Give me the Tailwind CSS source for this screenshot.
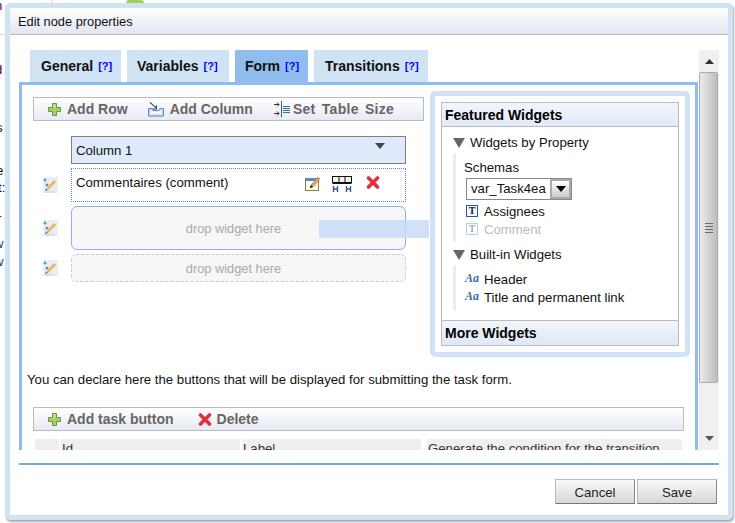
<!DOCTYPE html>
<html>
<head>
<meta charset="utf-8">
<script src="https://cdn.jsdelivr.net/npm/@tailwindcss/browser@4"></script>
</head>
<body class="relative w-[735px] h-[523px] overflow-hidden bg-white font-['Liberation_Sans',Arial,sans-serif] text-[13.2px] leading-4 text-[#111]">
<!-- page underneath the dialog -->
<div class="absolute left-[52px] top-0 w-px h-[3px] bg-[#f3c9d3]"></div>
<div class="absolute left-[126px] top-0 w-[18px] h-[3px] rounded-t-full bg-[#a5cf5a]"></div>
<div class="absolute left-0 top-[34px] w-[5px] h-px bg-[#f3c9d3]"></div>
<span class="absolute left-[-5px] top-[-2px] text-[#603]">n</span>
<span class="absolute left-[-5px] top-[62px] text-[#603]">d</span>
<span class="absolute left-[-4px] top-[120px]">s</span>
<span class="absolute left-[-4px] top-[163px]">e</span>
<span class="absolute left-[-2px] top-[180px]">t:</span>
<span class="absolute left-[-3px] top-[211px] text-[#603]">r</span>
<span class="absolute left-[-6px] top-[236px] text-[#246]">w</span>
<span class="absolute left-[-6px] top-[254px] text-[#246]">w</span>

<!-- dialog -->
<div class="absolute left-[5px] top-[3px] w-[728px] h-[517px] flex flex-col border-[5px] border-[#d0e3f5] rounded-[5px] bg-white shadow-[1px_2px_2px_#aaa]">
  <div class="h-[27px] shrink-0 flex items-center pl-[8px] pt-[2px] text-[12.8px] bg-gradient-to-b from-white to-[#e2e6f1] border-b border-[#bbb]">Edit node properties</div>

  <div class="mt-[15px] ml-[9px] w-[700px] h-[400px] shrink-0 flex overflow-hidden">
    <div class="w-[680px] shrink-0">
      <!-- tabs -->
      <div class="h-[32px] flex gap-[6px] pl-[11px] font-bold text-[14px]">
        <div class="w-[91px] pl-[11px] flex items-center gap-[5px] bg-[#d0e3f5]">General <span class="text-[11px] text-[#00f]">[?]</span></div>
        <div class="w-[102px] pl-[10px] flex items-center gap-[5px] bg-[#d0e3f5]">Variables <span class="text-[11px] text-[#00f]">[?]</span></div>
        <div class="w-[73px] pl-[10px] flex items-center gap-[5px] bg-[#90bdee]">Form <span class="text-[11px] text-[#00f]">[?]</span></div>
        <div class="w-[114px] pl-[11px] flex items-center gap-[5px] bg-[#d0e3f5]">Transitions <span class="text-[11px] text-[#00f]">[?]</span></div>
      </div>
      <!-- panel -->
      <div class="relative w-[679px] h-[400px] border-[3px] border-[#90bdee] pl-[5px] bg-white">
        <div class="flex ml-[6px] mt-[6px]">
          <!-- left column -->
          <div class="w-[391px] shrink-0 pt-[6px]">
            <div class="h-[24px] flex items-center pl-[14px] border border-[#bbb] bg-gradient-to-b from-white to-[#e6eaf4] font-bold text-[14px] text-[#666]">
              <svg class="w-[13px] h-[13px] mr-[6px]" viewBox="0 0 13 13"><path d="M4.5 .5h4v4h4v4h-4v4h-4v-4h-4v-4h4z" fill="#a9cf63" stroke="#5f9a45"/><path d="M5.5 1.5h2v3h-2z" fill="#d9ea9f"/></svg>
              <span>Add Row</span>
              <svg class="w-[16px] h-[15px] ml-[20px] mr-[6px]" viewBox="0 0 17 15"><path d="M.5 6.5h4l1 2h6l1-2h4v8H.5z" fill="#cfe0f2" stroke="#4f7fb0"/><path d="M3 9.500h11v2.500H3z" fill="#fff"/><path d="M2 0l7 6M9 3v4H5" fill="none" stroke="#234a7a" stroke-width="1.200"/></svg>
              <span>Add Column</span>
              <svg class="w-[16px] h-[16px] ml-[21px] mr-[3px]" viewBox="0 0 16 16"><path d="M0 3.500h5M3 1.500l2 2-2 2M0 12.500h5M3 10.500l2 2-2 2" fill="none" stroke="#333"/><path d="M7.500 0v16" stroke="#555"/><path d="M9 5.500h7M9 7.500h7M9 9.500h7M9 11.500h7" stroke="#3a6ea5"/></svg>
              <span class="[word-spacing:2px] tracking-[0.3px]">Set Table Size</span>
            </div>
            <div class="pl-[10px]">
              <div class="ml-[28px] mt-[15px] w-[335px] h-[28px] flex items-center justify-between pl-[4px] pr-[20px] border border-[#808080] bg-[#dfeafc]">
                <span class="mt-[2px]">Column 1</span>
                <svg class="w-[10px] h-[6px] mb-[9px]" viewBox="0 0 10 6"><path d="M0 0h10L5 6z" fill="#444"/></svg>
              </div>
              <div class="flex items-center mt-[4px] gap-[13px]">
                <svg class="w-[15px] h-[16px] shrink-0" viewBox="0 0 15 16"><rect width="15" height="16" fill="#e9eef6"/><circle cx="2" cy="3" r="1.500" fill="#4aa"/><circle cx="4" cy="8" r="1.500" fill="#5a8fd0"/><path d="M3 12L11 3l2 2-8 8z" fill="#e8b64c"/><path d="M3 12l-1 2 3-1z" fill="#555"/><path d="M2 15h10" stroke="#ccc"/></svg>
                <div class="w-[335px] h-[34px] flex justify-between border border-dotted border-[#5d8ac0] pl-[4px] pt-[6px] pr-[25px]">
                  <span>Commentaires (comment)</span>
                  <div class="flex items-start gap-[12px]">
                    <svg class="w-[15px] h-[16px]" viewBox="0 0 15 16"><rect x=".5" y="3.500" width="13" height="12" fill="#fffdf2" stroke="#8f8040"/><rect x="1" y="3" width="12" height="3" fill="#4d8fd6"/><path d="M6 10l7-8 2 2-7 8-3 1z" fill="#e8a15a" stroke="#a36a32" stroke-width=".5"/><path d="M5 13l1-3 2 2z" fill="#222"/></svg>
                    <svg class="w-[20px] h-[18px] mr-[2px]" viewBox="0 0 20 18"><rect x=".500" y="1.500" width="19" height="6" fill="#f4f4f4" stroke="#111"/><path d="M7 1v7M13 1v7" stroke="#111"/><path d="M.5 8h19" stroke="#111" stroke-width="2"/><path d="M1.500 11v6M5.500 11v6M1.500 14h4M14.500 11v6M18.500 11v6M14.500 14h4" stroke="#2f5b8a" stroke-width="1.400"/></svg>
                    <svg class="w-[14px] h-[13px] mt-[1px]" viewBox="0 0 14 13"><path d="M2.500 2l9 9M11.500 2l-9 9" stroke="#e0303c" stroke-width="3.600" stroke-linecap="round"/></svg>
                  </div>
                </div>
              </div>
              <div class="flex items-center mt-[4px] gap-[13px]">
                <svg class="w-[15px] h-[16px] shrink-0" viewBox="0 0 15 16"><rect width="15" height="16" fill="#e9eef6"/><circle cx="2" cy="3" r="1.500" fill="#4aa"/><circle cx="4" cy="8" r="1.500" fill="#5a8fd0"/><path d="M3 12L11 3l2 2-8 8z" fill="#e8b64c"/><path d="M3 12l-1 2 3-1z" fill="#555"/><path d="M2 15h10" stroke="#ccc"/></svg>
                <div class="w-[335px] h-[44px] flex items-center justify-center pt-[2px] pr-[10px] rounded-[6px] border border-[#8fb2e0] bg-[#f6f6f6] text-[12.8px] text-[#aaa]">drop widget here</div>
              </div>
              <div class="flex items-center mt-[4px] gap-[13px]">
                <svg class="w-[15px] h-[16px] shrink-0" viewBox="0 0 15 16"><rect width="15" height="16" fill="#e9eef6"/><circle cx="2" cy="3" r="1.500" fill="#4aa"/><circle cx="4" cy="8" r="1.500" fill="#5a8fd0"/><path d="M3 12L11 3l2 2-8 8z" fill="#e8b64c"/><path d="M3 12l-1 2 3-1z" fill="#555"/><path d="M2 15h10" stroke="#ccc"/></svg>
                <div class="w-[335px] h-[28px] flex items-center justify-center pt-[2px] pr-[10px] rounded-[5px] border border-dashed border-[#ccc] bg-[#f6f6f6] text-[12.8px] text-[#aaa]">drop widget here</div>
              </div>
            </div>
          </div>
          <!-- widgets panel -->
          <div class="ml-[6px] w-[260px] h-[266px] shrink-0 border-[5px] border-[#d0e3f5] rounded-[5px] p-[6px] bg-white">
            <div class="h-[244px] flex flex-col border border-[#bbb]">
              <div class="h-[24px] shrink-0 flex items-center pl-[3px] font-bold text-[14px] text-black border-b border-[#bbb] bg-gradient-to-b from-[#f2f5fb] to-[#e2eaf8]">Featured Widgets</div>
              <div class="flex-1 pl-[11px]">
                <div class="mt-[8px] h-[16px] flex items-center gap-[5px]">
                  <svg class="w-[12px] h-[10px]" viewBox="0 0 12 10"><path d="M0 0h12L6 10z" fill="#666"/></svg>
                  <span>Widgets by Property</span>
                </div>
                <div class="mt-[3px] h-[88px] border-l-[3px] border-[#e6edf8] pl-[8px] pt-[5px]">
                  <div class="h-[16px] pt-[1px]">Schemas</div>
                  <div class="mt-[3px] ml-[2px] w-[106px] h-[22px] flex items-center justify-between border border-[#888] pl-[4px]">
                    <span>var_Task4ea</span>
                    <span class="w-[21px] h-[20px] flex items-center justify-center border-2 border-[#aaa] bg-gradient-to-b from-white to-[#ccc]">
                      <svg class="w-[10px] h-[6px]" viewBox="0 0 10 6"><path d="M0 0h10L5 6z" fill="#000"/></svg>
                    </span>
                  </div>
                  <div class="mt-[2px] ml-[2px] h-[18px] flex items-center gap-[6px]">
                    <span class="w-[12px] h-[12px] flex items-center justify-center border border-[#2a5d96] bg-[#f2f6fb] font-['Liberation_Serif',serif] font-bold text-[10px] leading-none text-[#123]">T</span>
                    <span class="mt-[2px]">Assignees</span>
                  </div>
                  <div class="ml-[2px] h-[18px] flex items-center gap-[6px] text-[#bbb]">
                    <span class="w-[12px] h-[12px] flex items-center justify-center border border-[#b5cfe6] font-['Liberation_Serif',serif] font-bold text-[10px] leading-none text-[#aaa]">T</span>
                    <span class="mt-[2px]">Comment</span>
                  </div>
                </div>
                <div class="mt-[5px] h-[16px] flex items-center gap-[5px]">
                  <svg class="w-[12px] h-[10px]" viewBox="0 0 12 10"><path d="M0 0h12L6 10z" fill="#666"/></svg>
                  <span>Built-in Widgets</span>
                </div>
                <div class="mt-[3px] h-[44px] border-l-[3px] border-[#e6edf8] pl-[9px] pt-[4px]">
                  <div class="h-[18px] flex items-center gap-[4px]">
                    <span class="w-[15px] font-['Liberation_Serif',serif] italic font-bold text-[12px] leading-none text-[#3a6aa5] -mt-[3px]">Aa</span>
                    <span class="mt-[2px]">Header</span>
                  </div>
                  <div class="h-[18px] flex items-center gap-[4px]">
                    <span class="w-[15px] font-['Liberation_Serif',serif] italic font-bold text-[12px] leading-none text-[#3a6aa5] -mt-[3px]">Aa</span>
                    <span class="mt-[2px]">Title and permanent link</span>
                  </div>
                </div>
              </div>
              <div class="h-[25px] shrink-0 flex items-center pl-[3px] font-bold text-[14px] text-black border-t border-[#bbb] bg-gradient-to-b from-[#f2f5fb] to-[#dfe8f7]">More Widgets</div>
            </div>
          </div>
        </div>
        <!-- task buttons -->
        <p class="mt-[15px]">You can declare here the buttons that will be displayed for submitting the task form.</p>
        <div class="mt-[19px] ml-[6px] w-[651px] h-[24px] flex items-center pl-[14px] border border-[#bbb] bg-gradient-to-b from-white to-[#e6eaf4] font-bold text-[14px] text-[#666]">
          <svg class="w-[13px] h-[13px] mr-[6px]" viewBox="0 0 13 13"><path d="M4.5 .5h4v4h4v4h-4v4h-4v-4h-4v-4h4z" fill="#a9cf63" stroke="#5f9a45"/><path d="M5.5 1.5h2v3h-2z" fill="#d9ea9f"/></svg>
          <span>Add task button</span>
          <svg class="w-[14px] h-[13px] ml-[24px] mr-[5px]" viewBox="0 0 14 13"><path d="M2.500 2l9 9M11.500 2l-9 9" stroke="#e0303c" stroke-width="3.600" stroke-linecap="round"/></svg>
          <span>Delete</span>
        </div>
        <div class="mt-[8px] ml-[8px] w-[647px] flex h-[30px] gap-[2px]">
          <div class="w-[24px] bg-[#efefef]"></div>
          <div class="w-[179px] bg-[#efefef] pl-[1px] pt-[2px] text-[#333]">Id</div>
          <div class="w-[179px] bg-[#efefef] pl-[1px] pt-[2px] text-[#333]">Label</div>
          <div class="w-[255px] ml-[4px] bg-[#efefef] pl-[1px] pt-[2px] text-[#333]">Generate the condition for the transition</div>
        </div>
        <!-- dragged item ghost -->
        <div class="absolute left-[297px] top-[135px] w-[110px] h-[18px] bg-[#c4d9f7]/80"></div>
      </div>
    </div>
    <!-- scrollbar -->
    <div class="w-[20px] h-[400px] shrink-0 flex flex-col bg-[#f0f0f0]">
      <div class="h-[22px] flex items-center justify-center">
        <svg class="w-[9px] h-[5px]" viewBox="0 0 9 5"><path d="M0 5h9L4.500 0z" fill="#333"/></svg>
      </div>
      <div class="h-[311px] w-[19px] flex flex-col items-center justify-center gap-[2px] border border-[#aaa] rounded-[2px] bg-gradient-to-r from-[#ececec] to-[#bdbdbd]">
        <div class="w-[8px] h-px bg-[#666]"></div>
        <div class="w-[8px] h-px bg-[#666]"></div>
        <div class="w-[8px] h-px bg-[#666]"></div>
        <div class="w-[8px] h-px bg-[#666]"></div>
      </div>
      <div class="flex-1 flex items-end justify-center pb-[9px]">
        <svg class="w-[9px] h-[5px]" viewBox="0 0 9 5"><path d="M0 0h9L4.500 5z" fill="#555"/></svg>
      </div>
    </div>
  </div>

  <div class="mt-[13px] ml-[9px] w-[700px] h-[2px] shrink-0 bg-[#7aa7d8]"></div>
  <div class="mt-[14px] flex justify-end gap-[2px] pr-[11px]">
    <button class="w-[80px] h-[25px] pt-[2px] border border-[#bbb] border-r-[#888] border-b-[#777] bg-gradient-to-b from-[#f8f8f8] to-[#d8d8d8] text-[#222]">Cancel</button>
    <button class="w-[80px] h-[25px] pt-[2px] border border-[#bbb] border-r-[#888] border-b-[#777] bg-gradient-to-b from-[#f8f8f8] to-[#d8d8d8] text-[#222]">Save</button>
  </div>
</div>
</body>
</html>
